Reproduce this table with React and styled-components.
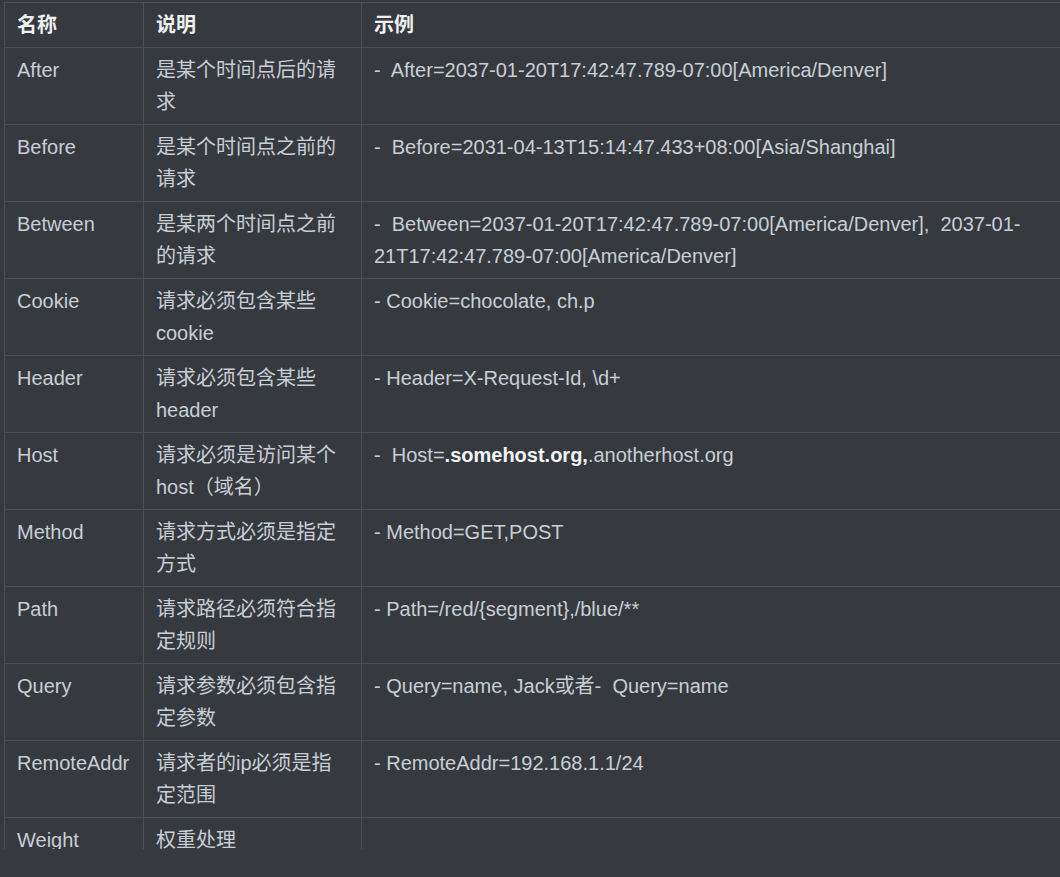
import styled, { createGlobalStyle } from "styled-components";

const GlobalStyle = createGlobalStyle`
  html, body {
    margin: 0;
    padding: 0;
    background: #363a3f;
  }
`;

const Frame = styled.div`
  height: 849px;
  overflow: hidden;
  padding: 2px 0 0 4px;
  box-sizing: border-box;
`;

const Table = styled.table`
  border-collapse: collapse;
  table-layout: fixed;
  width: 1080px;
  font-family: "Liberation Sans", Arial, "Noto Sans CJK SC", sans-serif;
  font-size: 20px;
  line-height: 32px;
  color: #c8ced6;
`;

const Th = styled.th`
  box-sizing: border-box;
  border: 1px solid #4b5056;
  padding: 6px 12px;
  text-align: left;
  font-weight: bold;
  color: #eef0f2;
  width: ${(p) => p.$w || "auto"};
`;

const Td = styled.td`
  border: 1px solid #4b5056;
  padding: 6px 12px;
  vertical-align: top;
  text-align: left;
`;

const Strong = styled.strong`
  color: #f2f4f6;
  font-weight: bold;
`;

const rows = [
  ["After", "是某个时间点后的请求", "-\u00a0 After=2037-01-20T17:42:47.789-07:00[America/Denver]"],
  ["Before", "是某个时间点之前的请求", "-\u00a0 Before=2031-04-13T15:14:47.433+08:00[Asia/Shanghai]"],
  [
    "Between",
    "是某两个时间点之前的请求",
    <>
      -&nbsp; Between=2037-01-20T17:42:47.789-07:00[America/Denver],&nbsp; 2037-01-<wbr />
      21T17:42:47.789-07:00[America/Denver]
    </>,
  ],
  ["Cookie", "请求必须包含某些cookie", "- Cookie=chocolate, ch.p"],
  ["Header", "请求必须包含某些header", "- Header=X-Request-Id, \\d+"],
  [
    "Host",
    "请求必须是访问某个host（域名）",
    <>
      -&nbsp; Host=<Strong>.somehost.org,</Strong>.anotherhost.org
    </>,
  ],
  ["Method", "请求方式必须是指定方式", "- Method=GET,POST"],
  ["Path", "请求路径必须符合指定规则", "- Path=/red/{segment},/blue/**"],
  ["Query", "请求参数必须包含指定参数", "- Query=name, Jack或者-\u00a0 Query=name"],
  ["RemoteAddr", "请求者的ip必须是指定范围", "- RemoteAddr=192.168.1.1/24"],
  ["Weight", "权重处理", ""],
];

export default function App() {
  return (
    <>
      <GlobalStyle />
      <Frame>
        <Table>
          <thead>
            <tr>
              <Th $w="139px">名称</Th>
              <Th $w="218px">说明</Th>
              <Th>示例</Th>
            </tr>
          </thead>
          <tbody>
            {rows.map(([name, desc, example]) => (
              <tr key={name}>
                <Td>{name}</Td>
                <Td>{desc}</Td>
                <Td>{example}</Td>
              </tr>
            ))}
          </tbody>
        </Table>
      </Frame>
    </>
  );
}
